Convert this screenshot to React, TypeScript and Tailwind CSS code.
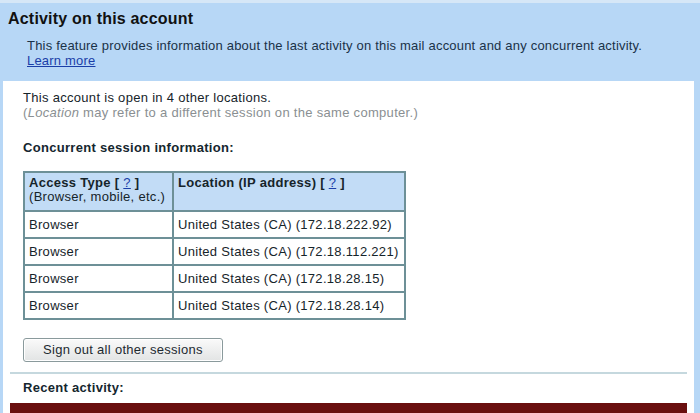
import React from 'react';

const rows = [
  { type: 'Browser', loc: 'United States (CA) (172.18.222.92)' },
  { type: 'Browser', loc: 'United States (CA) (172.18.112.221)' },
  { type: 'Browser', loc: 'United States (CA) (172.18.28.15)' },
  { type: 'Browser', loc: 'United States (CA) (172.18.28.14)' },
];

function Help() {
  return (
    <span className="font-bold">
      [ <span className="text-[#1a3ea8] underline font-normal">?</span> ]
    </span>
  );
}

export default function App() {
  return (
    <div
      className="h-[413px] w-[700px] overflow-hidden bg-[#b7d7f6] text-[13px] tracking-[0.3px] text-[#16242a]"
      style={{ fontFamily: '"Liberation Sans", Arial, sans-serif' }}
    >
      <div className="h-[3px] bg-[#d6e7f7]" />
      <div className="px-[8px] pb-[13px] pt-[5px]">
        <h1 className="text-[16px] font-bold leading-[22px] tracking-[0.2px] text-[#111]">Activity on this account</h1>
        <div className="mt-[8px] pl-[19px] leading-[15px] tracking-[0.2px] text-[#1a3248]">
          <p>This feature provides information about the last activity on this mail account and any concurrent activity.</p>
          <a className="text-[#1a3ea8] underline">Learn more</a>
        </div>
      </div>
      <div className="ml-[3px] mr-[6px] h-full bg-white px-[20px] pt-[9px]">
        <p className="leading-[15px]">This account is open in 4 other locations.</p>
        <p className="leading-[15px] text-[#8a8f92]">
          (<i>Location</i> may refer to a different session on the same computer.)
        </p>
        <h2 className="mt-[20px] font-bold leading-[15px] text-[#14262e]">Concurrent session information:</h2>
        <table className="mt-[16px] border-collapse border-2 border-[#6d9097]">
          <thead>
            <tr className="bg-[#c2dcf6] align-top">
              <th className="h-[39px] w-[149px] border-2 border-[#6d9097] px-[4px] pt-[3px] text-left font-normal leading-[14px]">
                <div className="font-bold">Access Type <Help /></div>
                <div>(Browser, mobile, etc.)</div>
              </th>
              <th className="w-[232px] border-2 border-[#6d9097] px-[4px] pt-[3px] text-left font-normal leading-[14px]">
                <div className="font-bold">Location (IP address) <Help /></div>
              </th>
            </tr>
          </thead>
          <tbody>
            {rows.map((r, i) => (
              <tr key={i}>
                <td className="h-[27px] border-2 border-[#6d9097] px-[4px]">{r.type}</td>
                <td className="whitespace-nowrap border-2 border-[#6d9097] px-[4px]">{r.loc}</td>
              </tr>
            ))}
          </tbody>
        </table>
        <button className="mt-[18px] h-[24px] w-[200px] rounded-[3px] border border-[#8a9a9c] bg-gradient-to-b from-[#fafafa] to-[#e2e4e4] text-[13px] tracking-[0.3px] text-[#1d2a30] shadow-[inset_0_0_0_1px_#fff]">
          Sign out all other sessions
        </button>
        <div className="-mx-[13px] mt-[10px] h-[2px] bg-[#c5d8de]" />
        <h2 className="mt-[6px] font-bold leading-[15px] text-[#14262e]">Recent activity:</h2>
        <div className="-mx-[13px] mt-[8px] h-[12px] bg-[#6a0f0f]" />
      </div>
    </div>
  );
}
